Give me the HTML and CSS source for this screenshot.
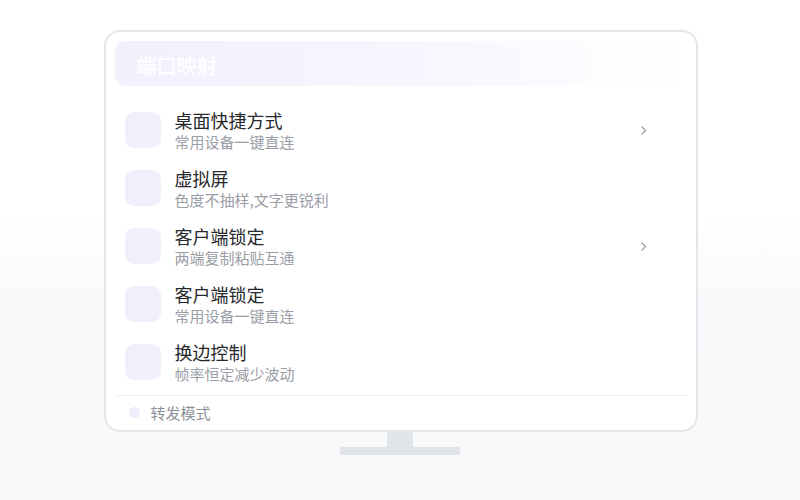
FILE: index.html
```html
<!DOCTYPE html>
<html lang="zh-CN">
<head>
    <meta charset="UTF-8">
    <meta name="viewport" content="width=device-width, initial-scale=1.0">
    <title>端口映射</title>
    <link rel="stylesheet" href="styles.css">
</head>
<body>
    <div class="stage">
        <div class="monitor">
            <div class="screen-head">
                <span class="head-title">端口映射</span>
                <span class="head-extra">映射</span>
            </div>

            <ul class="menu">
                <li class="menu-item">
                    <span class="item-icon"></span>
                    <div class="item-text">
                        <div class="item-title">桌面快捷方式</div>
                        <div class="item-sub">常用设备一键直连</div>
                    </div>
                    <svg class="chevron" width="7" height="11" viewBox="0 0 7 11"><polyline points="1.5,1.5 5.5,5.5 1.5,9.5" fill="none" stroke="#9aa0a9" stroke-width="1.3"/></svg>
                </li>
                <li class="menu-item">
                    <span class="item-icon"></span>
                    <div class="item-text">
                        <div class="item-title">虚拟屏</div>
                        <div class="item-sub">色度不抽样,文字更锐利</div>
                    </div>
                </li>
                <li class="menu-item">
                    <span class="item-icon"></span>
                    <div class="item-text">
                        <div class="item-title">客户端锁定</div>
                        <div class="item-sub">两端复制粘贴互通</div>
                    </div>
                    <svg class="chevron" width="7" height="11" viewBox="0 0 7 11"><polyline points="1.5,1.5 5.5,5.5 1.5,9.5" fill="none" stroke="#9aa0a9" stroke-width="1.3"/></svg>
                </li>
                <li class="menu-item">
                    <span class="item-icon"></span>
                    <div class="item-text">
                        <div class="item-title">客户端锁定</div>
                        <div class="item-sub">常用设备一键直连</div>
                    </div>
                </li>
                <li class="menu-item">
                    <span class="item-icon"></span>
                    <div class="item-text">
                        <div class="item-title">换边控制</div>
                        <div class="item-sub">帧率恒定减少波动</div>
                    </div>
                </li>
            </ul>

            <div class="screen-foot">
                <span class="foot-dot"></span>
                <span class="foot-label">转发模式</span>
            </div>
        </div>
        <div class="neck"></div>
        <div class="base"></div>
    </div>
</body>
</html>
```

FILE: styles.css
```css
body {
    margin: 0;
    font-family: "Noto Sans CJK SC", "Noto Sans", sans-serif;
    background: linear-gradient(to bottom, #ffffff 0%, #ffffff 42%, #f8f9fa 62%, #f9f9fa 100%);
    height: 500px;
    overflow: hidden;
}

.stage {
    display: flex;
    flex-direction: column;
    align-items: center;
    padding-top: 30px;
}

.monitor {
    box-sizing: border-box;
    width: 594px;
    height: 402px;
    margin-left: 1px;
    background: #fff;
    border: 2px solid #e3e6ea;
    border-radius: 16px;
    padding: 9px 9px 0;
    display: flex;
    flex-direction: column;
}

.screen-head {
    height: 45px;
    border-radius: 10px;
    background: linear-gradient(to right, #f3f0fe 0%, #f7f5fe 50%, rgba(255, 255, 255, 0) 100%);
    display: flex;
    align-items: center;
    justify-content: space-between;
    padding: 0 22px;
}

.head-title {
    color: #fff;
    font-size: 20px;
    font-weight: 500;
    line-height: 1;
    margin-top: 4px;
}

.head-extra {
    color: rgba(255, 255, 255, 0.6);
    font-size: 14px;
    margin-right: 8px;
}

.menu {
    list-style: none;
    margin: 25px 0 0;
    padding: 0 0 0 10px;
    display: flex;
    flex-direction: column;
    gap: 15px;
}

.menu-item {
    display: flex;
    align-items: flex-start;
    height: 43px;
    padding-right: 40px;
}

.item-icon {
    width: 36px;
    height: 36px;
    margin-top: 1px;
    border-radius: 9px;
    background: #f2effd;
    flex-shrink: 0;
}

.item-text {
    flex: 1;
    margin-left: 14px;
    margin-top: -1px;
}

.item-title {
    font-size: 18px;
    line-height: 21px;
    color: #26282c;
}

.item-sub {
    font-size: 15px;
    line-height: 21px;
    color: #9a9ea6;
}

.chevron {
    margin-top: 14px;
}

.screen-foot {
    margin-top: 9px;
    border-top: 1px solid #eef0f3;
    display: flex;
    align-items: center;
    height: 32px;
    padding-left: 14px;
}

.foot-dot {
    width: 11px;
    height: 11px;
    border-radius: 50%;
    background: #efecfd;
}

.foot-label {
    margin-left: 11px;
    font-size: 15px;
    color: #8b9099;
}

.neck {
    width: 26px;
    height: 15px;
    background: #e1e4e8;
}

.base {
    width: 120px;
    height: 8px;
    background: #e1e4e8;
}
```
